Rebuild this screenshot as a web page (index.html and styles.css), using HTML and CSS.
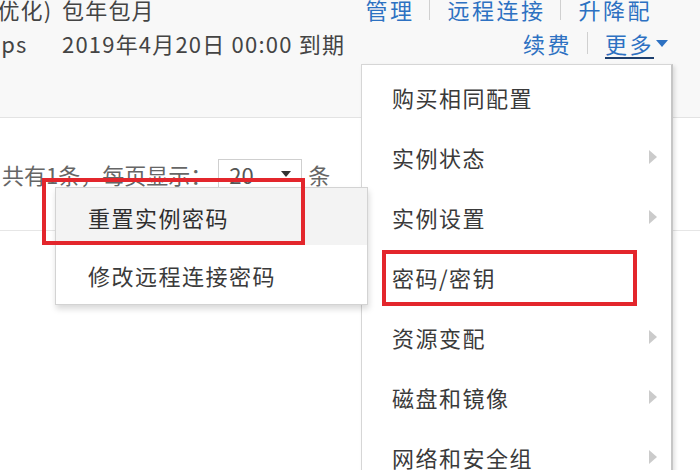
FILE: index.html
```html
<!DOCTYPE html>
<html lang="zh-CN">
<head>
    <meta charset="UTF-8">
    <meta name="viewport" content="width=device-width, initial-scale=1.0">
    <title>实例列表</title>
    <link rel="stylesheet" href="styles.css">
</head>
<body>
    <div class="page">
        <div class="instance-row">
            <div class="cells">
                <div class="line">
                    <span class="cell-net">(I/O优化)</span>
                    <span class="cell-pay">包年包月</span>
                </div>
                <div class="line">
                    <span class="cell-net">1Mbps</span>
                    <span class="cell-pay">2019年4月20日 00:00 到期</span>
                </div>
            </div>
            <div class="actions">
                <div class="line first">
                    <a href="#">管理</a><i class="sep"></i><a href="#">远程连接</a><i class="sep"></i><a href="#">升降配</a>
                </div>
                <div class="line">
                    <a href="#">续费</a><i class="sep"></i><a href="#" class="more">更多</a><span class="caret"></span>
                </div>
            </div>
        </div>

        <div class="pager">
            <span>共有1条，每页显示：</span>
            <div class="select">20<span class="select-caret"></span></div>
            <span>条</span>
        </div>

        <!-- dropdown from 更多 -->
        <ul class="menu">
            <li>购买相同配置</li>
            <li class="has-sub">实例状态</li>
            <li class="has-sub">实例设置</li>
            <li>密码/密钥</li>
            <li class="has-sub">资源变配</li>
            <li class="has-sub">磁盘和镜像</li>
            <li class="has-sub">网络和安全组</li>
        </ul>

        <!-- submenu of 密码/密钥 -->
        <ul class="submenu">
            <li class="active">重置实例密码</li>
            <li>修改远程连接密码</li>
        </ul>

        <div class="mark mark-reset"></div>
        <div class="mark mark-password"></div>
    </div>
</body>
</html>
```

FILE: styles.css
```css
/* Instance list with the "more" dropdown open */
body {
    margin: 0;
    padding: 0;
    background: #fff;
    font-family: "Noto Sans CJK SC", "Microsoft YaHei", sans-serif;
    color: #3a3a3a;
}
.page {
    position: relative;
    width: 700px;
    height: 470px;
    overflow: hidden;
}
.instance-row {
    display: flex;
    justify-content: space-between;
    height: 117px;
    background: #f8f8f8;
    border-bottom: 1px solid #e3e3e3;
    font-size: 22px;
    letter-spacing: 1.2px;
}
.line {
    display: flex;
    align-items: center;
    height: 34px;
    white-space: nowrap;
}
.cells {
    margin-top: -8px;
    margin-left: -46px;
}
.cell-net {
    flex-shrink: 0;
    width: 108px;
    overflow: hidden;
    color: #444;
}
.cell-pay {
    color: #444;
}
.actions {
    margin-top: -8px;
    padding-right: 32px;
    display: flex;
    flex-direction: column;
    align-items: flex-end;
}
.actions .first {
    padding-right: 16px;
}
.actions a {
    color: #2d71c2;
    text-decoration: none;
    letter-spacing: 2.5px;
}
.actions a.more {
    text-decoration: underline;
    text-decoration-color: #1d3f6e;
    text-underline-offset: 4px;
}
.sep {
    display: inline-block;
    width: 1px;
    height: 22px;
    margin: 0 17px 0 15px;
    background: #d0d0d0;
}
.caret {
    display: inline-block;
    margin-left: 2px;
    border-left: 6px solid transparent;
    border-right: 6px solid transparent;
    border-top: 7px solid #2d71c2;
}
.pager {
    display: flex;
    align-items: center;
    gap: 6px;
    height: 112px;
    padding-left: 2px;
    border-bottom: 1px solid #e6e6e6;
    font-size: 22px;
    color: #666;
    white-space: nowrap;
}
.select {
    display: flex;
    align-items: center;
    justify-content: space-between;
    box-sizing: border-box;
    width: 84px;
    height: 31px;
    padding: 0 10px 0 10px;
    border: 1px solid #cfcfcf;
    background: #fff;
    color: #555;
}
.select-caret {
    border-left: 5px solid transparent;
    border-right: 5px solid transparent;
    border-top: 6px solid #333;
}
.menu,
.submenu {
    list-style: none;
    margin: 0;
    position: absolute;
    background: #fff;
    font-size: 22px;
    letter-spacing: 1.5px;
    color: #3a3a3a;
}
.menu {
    left: 361px;
    top: 64px;
    width: 309px;
    height: 440px;
    padding: 2px 0 0;
    border: 1px solid #d6d6d6;
    border-right: 2px solid #c6c6c6;
    box-shadow: 2px 2px 4px rgba(0, 0, 0, 0.12);
}
.menu li {
    position: relative;
    display: flex;
    align-items: center;
    height: 60px;
    padding-left: 30px;
}
.menu li.has-sub::after {
    content: "";
    position: absolute;
    right: 14px;
    top: 23px;
    border-top: 7px solid transparent;
    border-bottom: 7px solid transparent;
    border-left: 8px solid #cbcbcb;
}
.submenu {
    left: 55px;
    top: 187px;
    width: 311px;
    padding: 0;
    border: 1px solid #d3d3d3;
    box-shadow: 1px 4px 6px rgba(0, 0, 0, 0.15);
    z-index: 2;
}
.submenu li {
    display: flex;
    align-items: center;
    height: 59px;
    padding-left: 32px;
}
.submenu li.active {
    height: 57px;
    background: #f3f3f3;
    color: #2e2e2e;
}
.mark {
    position: absolute;
    border: 4px solid #e3262c;
    box-sizing: border-box;
    z-index: 3;
}
.mark-reset {
    left: 42px;
    top: 178px;
    width: 263px;
    height: 67px;
}
.mark-password {
    left: 382px;
    top: 250px;
    width: 255px;
    height: 56px;
}
```
